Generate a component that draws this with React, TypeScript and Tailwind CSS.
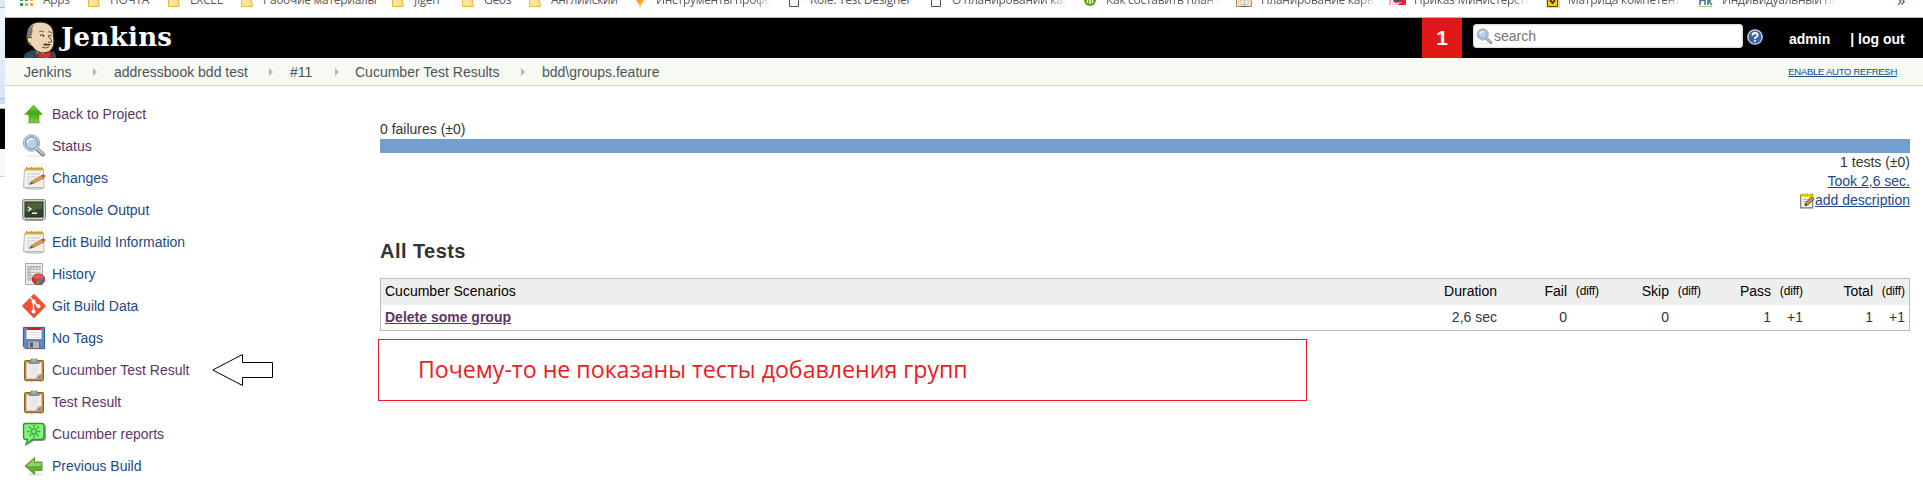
import React from 'react';

type BookmarkKind = 'apps' | 'folder' | 'bulb' | 'page' | 'green' | 'book' | 'red' | 'yellow' | 'pk';

const bookmarks: { kind: BookmarkKind; label: string; box: string; text: string; fade?: boolean }[] = [
  { kind: 'apps', label: 'Apps', box: 'w-[68px]', text: 'pl-[23px]' },
  { kind: 'folder', label: 'ПОЧТА', box: 'w-[80px]', text: 'pl-[22px]' },
  { kind: 'folder', label: 'EXCEL', box: 'w-[73px]', text: 'pl-[22px]' },
  { kind: 'folder', label: 'Рабочие материалы', box: 'w-[151px]', text: 'pl-[22px]' },
  { kind: 'folder', label: 'Jigen', box: 'w-[70px]', text: 'pl-[22px]' },
  { kind: 'folder', label: 'Geos', box: 'w-[67px]', text: 'pl-[22px]' },
  { kind: 'folder', label: 'Английский', box: 'w-[106px]', text: 'pl-[22px]' },
  { kind: 'bulb', label: 'Инструменты профе', box: 'w-[154px]', text: 'pl-[21px]', fade: true },
  { kind: 'page', label: 'Role: Test Designer', box: 'w-[142px]', text: 'pl-[21px]' },
  { kind: 'page', label: 'О планировании кар', box: 'w-[153px]', text: 'pl-[21px]', fade: true },
  { kind: 'green', label: 'Как составить план п', box: 'w-[152px]', text: 'pl-[22px]', fade: true },
  { kind: 'book', label: 'Планирование карье', box: 'w-[153px]', text: 'pl-[25px]', fade: true },
  { kind: 'red', label: 'Приказ Министерств', box: 'w-[157px]', text: 'pl-[25px]', fade: true },
  { kind: 'yellow', label: 'Матрица компетентн', box: 'w-[153px]', text: 'pl-[22px]', fade: true },
  { kind: 'pk', label: 'Индивидуальный пла', box: 'w-[198px]', text: 'pl-[23px]', fade: true },
];

function BookmarkIcon({ kind }: { kind: BookmarkKind }) {
  return (
    <svg className="absolute left-0 top-0" width="18" height="10" viewBox="0 0 18 10">
      {kind === 'apps' && (
        <g>
          <path d="M0 0h3v1h-3zM0 3h3v3h-3z" fill="#2c9c57" />
          <path d="M5 3h3v3h-3z" fill="#f6ab1c" />
          <path d="M5 0h3v1h-3z" fill="#3d7de0" />
          <path d="M10 0h3v1h-3zM10 3h3v3h-3z" fill="#f6ab1c" />
        </g>
      )}
      {kind === 'folder' && (
        <g>
          <path d="M.5-1V6.500H11.500V4L10.500 3V-1z" fill="#ffe694" stroke="#e8bd3a" />
          <path d="M8.500 6V3.500L9.500 2.500V-1" fill="none" stroke="#f5d469" />
        </g>
      )}
      {kind === 'bulb' && <path d="M1 0h8L7 3.500H6V5H4V3.500H3zM4 6h2v1H4z" fill="#f5a623" />}
      {kind === 'page' && <path d="M.5-1V6.500H9.500V-1" fill="#fff" stroke="#555" />}
      {kind === 'green' && (
        <g>
          <circle cx="6" cy="0" r="6" fill="#62a70f" />
          <path d="M3.500 0v3M6 0v4M8.500 0v3" stroke="#fff" strokeWidth="1.300" />
        </g>
      )}
      {kind === 'book' && (
        <g>
          <path d="M.5-1V6.500H15.500V-1" fill="#f3e3c4" stroke="#a98a5c" />
          <path d="M5 0h3v5L5 4zM9 0h3v4L9 5z" fill="#fff" stroke="#c6a878" strokeWidth=".7" />
          <path d="M5 6.500h6" stroke="#335f91" />
        </g>
      )}
      {kind === 'red' && (
        <g>
          <path d="M4 0h13v5H5z" fill="#ee2233" />
          <path d="M1 0v5" stroke="#ee5555" />
          <path d="M2 0l5 3 6-1-5 3H3z" fill="#fbd5d8" />
          <path d="M5 0h7L9 2z" fill="#2a56a0" />
        </g>
      )}
      {kind === 'yellow' && (
        <g>
          <path d="M-1-1h15v9h-15z" fill="#d4d4d4" />
          <path d="M1.500-1V6.500H11.500V-1z" fill="#fdc70c" stroke="#554a20" />
          <path d="M4 0l2.500 3L9 0" fill="none" stroke="#222" strokeWidth="1.500" />
        </g>
      )}
      {kind === 'pk' && (
        <g>
          <path d="M1 0v5M6 0v5M9 0v5M12 0L10 1.500 13 5M1 .5h5" stroke="#4f7f88" strokeWidth="1.700" fill="none" />
          <path d="M0 6.500h13" stroke="#9fd08a" />
        </g>
      )}
    </svg>
  );
}

function Magnifier({ size }: { size: number }) {
  return (
    <svg width={size} height={size} viewBox="0 0 24 24">
      <ellipse cx="13" cy="22" rx="9" ry="1.500" fill="#eee" />
      <path d="M14.500 14.500L21 20.500" stroke="#777" strokeWidth="4" strokeLinecap="round" />
      <path d="M15.500 15L21 20" stroke="#c7c7c7" strokeWidth="2" strokeLinecap="round" />
      <circle cx="9.500" cy="9" r="8.200" fill="#d5d8dc" stroke="#a4a6a8" />
      <circle cx="9.500" cy="9" r="6.200" fill="#b5d0ef" stroke="#6486b4" />
      <path d="M5.500 9a4 4 0 0 1 6-3.500" stroke="#e6f1fc" strokeWidth="2" fill="none" />
    </svg>
  );
}

function Notepad() {
  return (
    <svg width="24" height="24" viewBox="0 0 24 24">
      <ellipse cx="12" cy="22.500" rx="10" ry="1.300" fill="#ccc" />
      <path d="M2.500 3.500h19l.5 18H1.500z" fill="#f1f1ef" stroke="#b9b9b6" />
      <path d="M3.500 2h18v2.500h-18z" fill="#d3b63c" />
      <path d="M4.500 1v2M7 1v2M9.500 1v2M12 1v2M14.500 1v2M17 1v2M19.500 1v2" stroke="#a5861c" />
      <path d="M5 8h13M5 11h10M5 14h5M5 17h4" stroke="#cdcfcd" />
      <path d="M9.500 15.500l10-6 2.500 2.500-10 5-4.500 1.500z" fill="#e0a245" stroke="#8c6228" strokeWidth=".7" />
      <path d="M19 9.500l2.500-1.200 2.200 1.500-1.700 2.200z" fill="#d9503e" />
      <path d="M6.500 18.500l3.500-2.500 1.500 1.300z" fill="#555" />
    </svg>
  );
}

function SmallNotepad() {
  return (
    <svg width="15" height="16" viewBox="0 0 15 16">
      <path d="M.7 2v12.800h12V2z" fill="#f4f4f4" stroke="#777" strokeWidth="1.200" />
      <path d="M1 1h12v3H1z" fill="#f0cf33" />
      <path d="M2.500.5v2M5 .5v2M7.500.5v2M10 .5v2M12.500.5v2" stroke="#a98a12" strokeWidth=".9" />
      <path d="M3 6.500h7M3 8.500h5M3 10.500h3" stroke="#bbb" />
      <path d="M6 9.500L11.500 4l2.300 2L8.200 11.500 5 12.800z" fill="#d69a42" stroke="#5d4420" />
      <path d="M4.800 13l1-2 1.400 1.200z" fill="#333" />
    </svg>
  );
}

function Clipboard() {
  return (
    <svg width="24" height="24" viewBox="0 0 24 24">
      <path d="M3 23.500h18" stroke="#ddd" />
      <rect x="2.500" y="2.500" width="19" height="20" rx="1" fill="#c28431" stroke="#97651f" />
      <path d="M4.500 4.500h15V20.500h-15z" fill="#efefee" stroke="#cfcecb" strokeWidth=".6" />
      <path d="M7.500 8.500h8M7.500 11h8M7.500 13.500h8M7.500 16h5" stroke="#dcdcdc" />
      <path d="M13.500 20.500l1.500-4.500 4.500-.5z" fill="#cfcfcf" />
      <path d="M13.500 20.500l6-5V20.500z" fill="#8f8f89" />
      <path d="M7 5.500V3.500l2-1V1h6v1.500l2 1v2z" fill="#9a9c96" stroke="#777a74" strokeWidth=".8" />
      <path d="M10 2h4" stroke="#c5c7c2" />
    </svg>
  );
}

function ArrowUp() {
  return (
    <svg width="24" height="24" viewBox="0 0 24 24">
      <defs>
        <linearGradient id="up" x1="0" y1="0" x2="0" y2="1">
          <stop offset="0" stopColor="#7fcb3c" />
          <stop offset=".5" stopColor="#45a516" />
          <stop offset="1" stopColor="#83cc45" />
        </linearGradient>
      </defs>
      <ellipse cx="12" cy="21" rx="8" ry="1.500" fill="#ddd" />
      <path d="M11.500 3L20.300 12.500H17V20.500H7V12.500H3z" fill="url(#up)" stroke="#58a82e" strokeWidth=".8" />
    </svg>
  );
}

function ArrowLeft() {
  return (
    <svg width="24" height="24" viewBox="0 0 24 24">
      <ellipse cx="13" cy="20.500" rx="8" ry="1.300" fill="#e3e3e3" />
      <path d="M3 12L12.500 3.500V8H20V16.500H12.500V20.500z" fill="#5fb02b" stroke="#5b9d33" />
      <path d="M4.500 12l7.500-6.500V9h7v3z" fill="#93cf69" />
    </svg>
  );
}

function Terminal() {
  return (
    <svg width="24" height="24" viewBox="0 0 24 24">
      <path d="M3 22.500h18" stroke="#999" />
      <rect x=".5" y="1.500" width="23" height="20" rx="2" fill="#d0d1cd" stroke="#888a85" />
      <rect x="3" y="4" width="18" height="15" fill="#304426" stroke="#20291c" />
      <path d="M3.500 4.500h17v6l-17 4z" fill="#4a6140" />
      <path d="M6 9l3 2-3 2M10 15.200h5" stroke="#f4f7f1" strokeWidth="1.400" fill="none" />
    </svg>
  );
}

function HistoryIcon() {
  return (
    <svg width="24" height="24" viewBox="0 0 24 24">
      <path d="M3.500 1.500h17v21h-17z" fill="#ececec" stroke="#a8a8a8" />
      <path d="M5.500 4h13v15h-13z" fill="#f6f6f6" />
      <path d="M5.500 4h13v2.500h-13zM5.500 6h3v13h-3z" fill="#c9c9c9" />
      <path d="M5.500 4.500h13M5.500 7.500h13M5.500 10.500h13M5.500 13.500h13M5.500 16.500h8M6 4v15M9 4v15M12 4v12M15 4v10M18 4v9" stroke="#b3b3b3" strokeWidth=".8" />
      <ellipse cx="16.500" cy="17.300" rx="6.300" ry="5.300" fill="#d83232" stroke="#a62525" />
      <path d="M11 15.500a6 5 0 0 1 11 0l-6 1.500z" fill="#ef5555" />
      <path d="M16.500 17l-2.500 4.500q2 1.200 4 .5z" fill="#65a93c" />
      <path d="M16.500 17l5.800-1q.8 4-4 5.800z" fill="#4a72b8" />
    </svg>
  );
}

function GitIcon() {
  return (
    <svg width="24" height="24" viewBox="0 0 24 24">
      <path d="M12 .9L23.100 12 12 23.100.9 12z" fill="#f05033" stroke="#f05033" strokeWidth="1.600" strokeLinejoin="round" />
      <path d="M8.500 3.500l3 3.500V17.500M11.500 7.500l5 5" stroke="#fff" strokeWidth="1.500" fill="none" />
      <circle cx="11.600" cy="7.500" r="2" fill="#fff" />
      <circle cx="11.600" cy="17.500" r="2" fill="#fff" />
      <circle cx="16.500" cy="12.300" r="2" fill="#fff" />
    </svg>
  );
}

function Floppy() {
  return (
    <svg width="24" height="24" viewBox="0 0 24 24">
      <path d="M0 0h24v24H0z" fill="#ececec" />
      <path d="M1.500 1.500h21v21H3.500l-2-2z" fill="#6287c4" stroke="#3d5f9c" />
      <path d="M4.500 2h15v11h-15z" fill="#fafafa" />
      <path d="M4.500 2h15v2h-15z" fill="#dc1c14" />
      <path d="M6 6.500h12M6 9h12M6 11.500h12" stroke="#e3e3e3" />
      <path d="M6 15h11.500v7.500H6z" fill="#b5b8b4" stroke="#5a5e66" strokeWidth=".7" />
      <path d="M8 16.500h3v5H8z" fill="#4f5a68" />
    </svg>
  );
}

function CucumberIcon() {
  return (
    <svg width="24" height="24" viewBox="0 0 24 24">
      <path d="M5 3h17q2 0 2 2v11q0 3-3 3h-9l-7 4z" fill="#999" />
      <path d="M3 1.500h17q2 0 2 2v11q0 3-3 3h-8.500L4 22.500l1.500-5H4q-2.500 0-2.500-3V3.500q0-2 1.500-2z" fill="#86f078" stroke="#249c31" strokeWidth="1.400" />
      <g stroke="#3ba347" strokeWidth="1.600" strokeDasharray="2 .8">
        <path d="M12 3v13M5 9.500h14M7 4.500l10 10M17 4.500l-10 10" />
      </g>
      <circle cx="12" cy="9.500" r="3.200" fill="none" stroke="#4cb856" />
      <circle cx="12" cy="9.500" r="1.500" fill="#86f078" />
    </svg>
  );
}

const tasks: { label: string; icon: React.ReactNode; visited?: boolean }[] = [
  { label: 'Back to Project', icon: <ArrowUp />, visited: true },
  { label: 'Status', icon: <Magnifier size={24} />, visited: true },
  { label: 'Changes', icon: <Notepad /> },
  { label: 'Console Output', icon: <Terminal /> },
  { label: 'Edit Build Information', icon: <Notepad /> },
  { label: 'History', icon: <HistoryIcon /> },
  { label: 'Git Build Data', icon: <GitIcon /> },
  { label: 'No Tags', icon: <Floppy /> },
  { label: 'Cucumber Test Result', icon: <Clipboard />, visited: true },
  { label: 'Test Result', icon: <Clipboard />, visited: true },
  { label: 'Cucumber reports', icon: <CucumberIcon />, visited: true },
  { label: 'Previous Build', icon: <ArrowLeft /> },
];

function Butler() {
  return (
    <svg width="34" height="37" viewBox="23 21 34 37">
      <path d="M24 58q0-4 2-5l6-3 8 2 8 1 5-2q3 1 3 7z" fill="#335061" />
      <path d="M25 57q2-4 7-5l4 6M52 52l-2 6" stroke="#1d2f3a" fill="none" />
      <path d="M35 49l5 9h9l2-6-3-1z" fill="#e9edf0" />
      <path d="M32 46Q26 44 27 38q0-3 1-9 3-7 12-7 10 0 13 8l1 11q0 5-2 8-3 4-8 4-8 0-12-7z" fill="#efd4b4" stroke="#2b211b" />
      <path d="M34 24q-7 3-7.500 14l3-1 2-1 1-4q-1-4 1.500-8z" fill="#7d7976" />
      <path d="M32 38q-4-2-5 1 0 4 4 5" fill="#efd4b4" stroke="#3a2c24" />
      <path d="M39 32q2-2 5 0M48 32q2-1 4 1" stroke="#6b5a4c" fill="none" />
      <path d="M40 35.500q2-1.500 4 0l-1 1.500M48.500 36q2-1 3 0" stroke="#3a2c24" fill="none" />
      <path d="M48 36l4 5q-1 2-4 1" stroke="#4a392d" fill="none" strokeWidth=".9" />
      <path d="M43 45q2-3 4-1 3-1 4 1-4 1-8 0z" fill="#4c3a2e" />
      <path d="M42 47q4 2 7 0" stroke="#6f4c38" fill="none" />
      <path d="M38 52.500l5 2 3-2 5-1v6.500l-4-1-4 .5-5 1z" fill="#d8302c" stroke="#641512" strokeWidth=".7" />
      <path d="M43 54v3.500h3V54z" fill="#f0504c" stroke="#7e1815" strokeWidth=".5" />
    </svg>
  );
}

function Separator() {
  return (
    <svg width="4" height="8" viewBox="0 0 4 8">
      <path d="M0 0L4 4 0 8z" fill="#b5b5b5" />
    </svg>
  );
}

const crumbs = [
  { label: 'Jenkins', box: 'w-[90px]', lead: 'w-[69px]' },
  { label: 'addressbook bdd test', box: 'w-[176px]', lead: 'w-[155px]' },
  { label: '#11', box: 'w-[65px]', lead: 'w-[45px]' },
  { label: 'Cucumber Test Results', box: 'w-[187px]', lead: 'w-[166px]' },
];

const groups = [
  { name: 'Fail', value: '0', diff: '', a: 'w-[70px]', b: 'w-[32px]' },
  { name: 'Skip', value: '0', diff: '', a: 'w-[70px]', b: 'w-[32px]' },
  { name: 'Pass', value: '1', diff: '+1', a: 'w-[70px]', b: 'w-[32px]' },
  { name: 'Total', value: '1', diff: '+1', a: 'w-[70px]', b: 'w-[32px]' },
];

export default function App() {
  return (
    <div className="flex h-[488px] w-[1923px] overflow-hidden bg-white font-['Liberation_Sans',sans-serif] text-[14px] leading-[19px] text-[#333]">
      <div className="flex w-[5px] shrink-0 flex-col">
        <div className="h-[7px] bg-[#dfe9f5]" />
        <div className="h-px bg-[#a9b9d3]" />
        <div className="h-[90px] bg-linear-to-b from-[#f0f6fd] to-[#d9e5f5]" />
        <div className="h-px bg-[#a9b9d3]" />
        <div className="h-[5px] bg-[#cfdcee]" />
        <div className="h-[4px] bg-white" />
        <div className="h-px bg-[#b0b0b0]" />
        <div className="h-[40px] bg-black" />
        <div className="h-[27px] bg-[#f6faf2]" />
        <div className="h-px bg-[#d3d7cf]" />
      </div>

      <div className="flex w-[1918px] flex-col">
        <div className="flex h-[18px] overflow-hidden border-b border-[#b2b2b2] bg-white pl-[15px] font-['Open_Sans','Noto_Sans',sans-serif] text-[12px] text-[#5a5a5a]">
          {bookmarks.map((b, i) => (
            <div key={i} className={`relative shrink-0 ${b.box} ${b.text}`}>
              <BookmarkIcon kind={b.kind} />
              <div
                className={`-mt-[9px] h-[18px] overflow-hidden whitespace-nowrap leading-[18px] tracking-[-0.3px] ${
                  b.fade ? 'w-[114px] mask-r-from-86% mask-r-to-100%' : ''
                }`}
              >
                {b.label}
              </div>
            </div>
          ))}
          <div className="-mt-[9px] text-[17px] leading-[18px]">»</div>
        </div>

        <header className="flex h-[40px] bg-black text-white">
          <div className="flex w-[1417px]">
            <div className="h-[40px] pl-[18px] pt-[3px]"><Butler /></div>
            <span className="pl-[4px] pt-[2px] font-['DejaVu_Serif',serif] text-[26px] font-bold leading-[34px] tracking-[0.3px]">Jenkins</span>
          </div>
          <div className="flex w-[40px] items-center justify-center bg-[#e11818] pb-[2px] text-[21px] font-bold">1</div>
          <div className="ml-[11px] mt-[6px] flex h-[24px] w-[270px] items-center rounded-[4px] bg-white pl-[3px] text-[#757575] shadow-[inset_0_0_3px_#aaa]">
            <Magnifier size={17} />
            <span className="pl-px">search</span>
          </div>
          <svg className="ml-[4px] mt-[11px]" width="16" height="16" viewBox="0 0 16 16">
            <circle cx="8" cy="8" r="7.200" fill="#3c66a6" stroke="#d0dced" strokeWidth="1.300" />
            <path d="M5.500 6.500Q5.500 4 8 4q2.600 0 2.600 2.200Q10.500 7.500 8 9v1M8 11.200v1.600" stroke="#fff" strokeWidth="1.900" fill="none" />
          </svg>
          <span className="pl-[26px] pt-[12px] font-bold">admin</span>
          <span className="pl-[20px] pt-[12px] font-bold">| log out</span>
        </header>

        <nav className="flex h-[28px] items-center border-b border-[#d3d7cf] bg-[#f6faf2] pl-[19px] pt-px text-[#4d545d]">
          {crumbs.map((c) => (
            <div key={c.label} className={`flex shrink-0 items-center ${c.box}`}>
              <span className={`whitespace-nowrap ${c.lead}`}>{c.label}</span>
              <Separator />
            </div>
          ))}
          <span>bdd\groups.feature</span>
          <span className="-mt-[2px] ml-auto mr-[26px] text-[9.600px] tracking-[-0.33px] text-[#204a87] underline">ENABLE AUTO REFRESH</span>
        </nav>

        <div className="flex">
          <aside className="flex w-[375px] flex-col pl-[17px] pt-[12px]">
            {tasks.map((t) => (
              <div key={t.label} className="flex h-[32px] items-center">
                {t.icon}
                <span className={`pl-[6px] ${t.visited ? 'text-[#5c3566]' : 'text-[#204a87]'}`}>{t.label}</span>
                {t.label === 'Cucumber Test Result' && (
                  <svg className="-mt-px ml-[23px]" width="62" height="34" viewBox="0 0 62 34">
                    <path d="M.8 17L30.500 1.500V9.500H60.500V24.500H30.500V32.500z" fill="none" stroke="#000" />
                  </svg>
                )}
              </div>
            ))}
          </aside>

          <main className="flex w-[1530px] flex-col pt-[34px]">
            <div className="h-[19px] leading-[19px]">0 failures (±0)</div>
            <div className="h-[14px] bg-[#729fcf]" />
            <div className="flex flex-col items-end">
              <div>1 tests (±0)</div>
              <div className="text-[#204a87] underline">Took 2,6 sec.</div>
              <div className="flex items-center text-[#204a87]">
                <SmallNotepad />
                <span className="underline">add description</span>
              </div>
            </div>
            <h1 className="mt-[28px] text-[20px] font-bold leading-[26px] tracking-[0.45px]">All Tests</h1>
            <div className="mt-[14px] flex flex-col border border-[#bbb]">
              <div className="flex h-[26px] items-center bg-[#eee] pb-[2px] text-black">
                <span className="w-[1019px] pl-[4px]">Cucumber Scenarios</span>
                <span className="w-[97px] text-right">Duration</span>
                {groups.map((g) => (
                  <div key={g.name} className="flex">
                    <span className={`text-right ${g.a}`}>{g.name}</span>
                    <span className={`text-right text-[12px] tracking-[-0.1px] ${g.b}`}>(diff)</span>
                  </div>
                ))}
              </div>
              <div className="flex h-[25px] items-center">
                <span className="w-[1019px] pl-[4px] font-bold text-[#5c3566] underline">Delete some group</span>
                <span className="w-[97px] text-right">2,6 sec</span>
                {groups.map((g) => (
                  <div key={g.name} className="flex">
                    <span className={`text-right ${g.a}`}>{g.value}</span>
                    <span className={`text-right ${g.b}`}>{g.diff}</span>
                  </div>
                ))}
              </div>
            </div>
            <div className="-ml-[2px] mt-[8px] flex h-[62px] w-[929px] items-center border border-[#ed1c24] pb-px pl-[39px] font-['Open_Sans',sans-serif] text-[23.200px] tracking-[-0.02px] text-[#ed1c24]">
              Почему-то не показаны тесты добавления групп
            </div>
          </main>
        </div>
      </div>
    </div>
  );
}
